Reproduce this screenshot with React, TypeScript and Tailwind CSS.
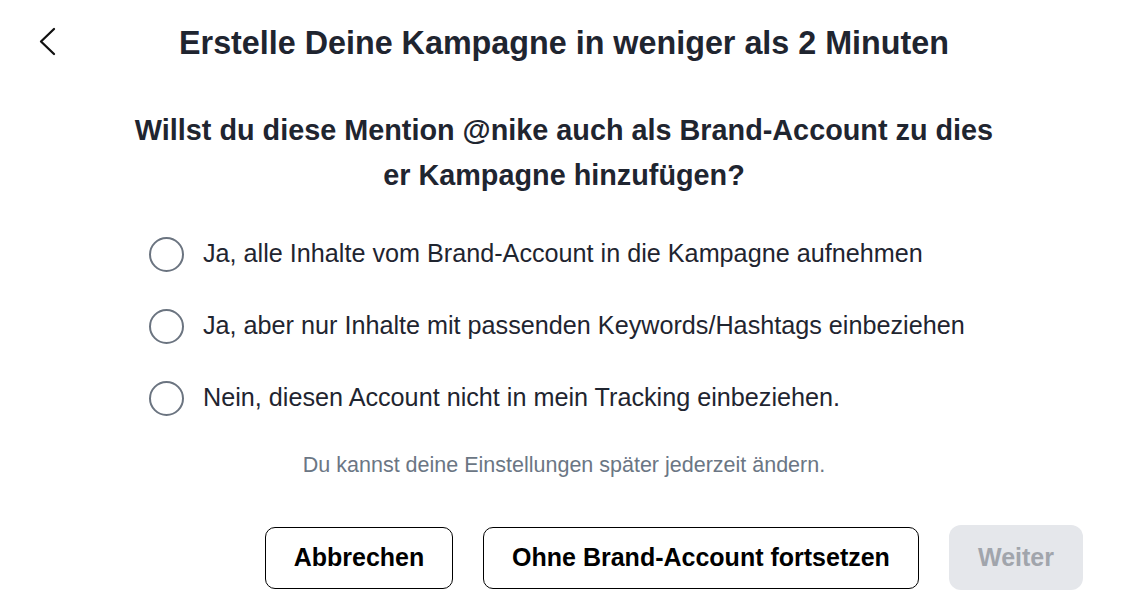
import React from "react";

const options = [
  "Ja, alle Inhalte vom Brand-Account in die Kampagne aufnehmen",
  "Ja, aber nur Inhalte mit passenden Keywords/Hashtags einbeziehen",
  "Nein, diesen Account nicht in mein Tracking einbeziehen.",
];

export default function App() {
  return (
    <div
      className="w-[1128px] h-[608px] bg-white text-[#1f2530] flex flex-col"
      style={{ fontFamily: '"Liberation Sans", Arial, sans-serif' }}
    >
      <div className="relative flex items-center justify-center h-[86px]">
        <button className="absolute left-[38px] top-[27px]">
          <svg width="20" height="30" viewBox="0 0 20 30" fill="none">
            <path d="M16 2 L3 14.5 L16 27" stroke="#111" strokeWidth="2.3" strokeLinecap="round" strokeLinejoin="round" />
          </svg>
        </button>
        <h1 className="text-[32.3px] font-bold">
          Erstelle Deine Kampagne in weniger als 2 Minuten
        </h1>
      </div>
      <div className="flex justify-center mt-[22px]">
        <h2 className="w-[868px] text-center text-[28.8px] font-bold leading-[45px] break-all">
          Willst du diese Mention @nike auch als Brand-Account zu dieser Kampagne hinzufügen?
        </h2>
      </div>
      <div className="flex flex-col pl-[149px] mt-[38px] gap-[36px]">
        {options.map((o) => (
          <label key={o} className="flex items-center gap-[19px] h-[36px]">
            <span className="w-[35px] h-[35px] rounded-full border-[2.5px] border-[#6b7480] bg-white shrink-0" />
            <span className="text-[25.2px] text-[#1f2530]">{o}</span>
          </label>
        ))}
      </div>
      <p className="text-center text-[21.5px] text-[#6b7684] mt-[33px]">
        Du kannst deine Einstellungen später jederzeit ändern.
      </p>
      <div className="flex justify-end items-center gap-[30px] pr-[45px] mt-[44px]">
        <button className="h-[62px] w-[188px] rounded-[10px] border border-black text-[25px] font-bold text-black">
          Abbrechen
        </button>
        <button className="h-[62px] w-[436px] rounded-[10px] border border-black text-[25px] font-bold text-black">
          Ohne Brand-Account fortsetzen
        </button>
        <button className="h-[65px] w-[134px] rounded-[12px] bg-[#e5e7eb] text-[25px] font-bold text-[#a1a5ac]">
          Weiter
        </button>
      </div>
    </div>
  );
}
